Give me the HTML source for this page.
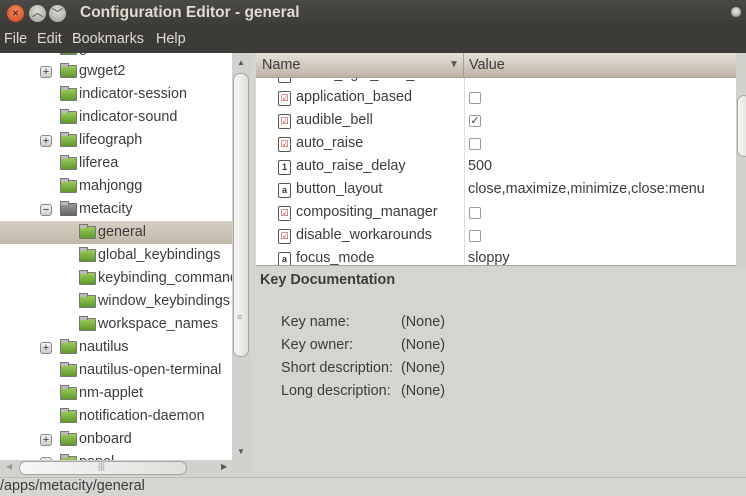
<!DOCTYPE html>
<html><head><style>
*{margin:0;padding:0;box-sizing:border-box}
body{width:746px;height:496px;overflow:hidden;background:#d6d4d1;font-family:"Liberation Sans","DejaVu Sans",sans-serif;font-size:14.4px;color:#3c3c3c;position:relative}
.a{position:absolute;white-space:nowrap}
#title{left:0;top:0;width:746px;height:27px;background:linear-gradient(#4a4944,#3c3b37)}
#menu{left:0;top:27px;width:746px;height:26px;background:#3c3b37;color:#dfdbd2}
.wb{position:absolute;top:5px;width:17px;height:17px;border-radius:50%}
#tree{left:0;top:53px;width:232px;height:407px;background:#fff;overflow:hidden}
.row{position:absolute;left:0;width:232px;height:23px;line-height:23px}
.fold{position:absolute;top:5px;width:17px;height:13px;border:1px solid #777;border-radius:1px;background:linear-gradient(#9ccb5a,#5e9a2c)}
.fold:before{content:"";position:absolute;left:-1px;top:-3px;width:7px;height:3px;background:#bbb;border:1px solid #777;border-bottom:none}
.exp{position:absolute;top:6px;width:12px;height:12px;border:1px solid #888;border-radius:3px;background:linear-gradient(#f4f4f4,#ccc);font-size:11px;line-height:10px;text-align:center;color:#333}
.vs{background:#d3d1cd}
.thumb{position:absolute;background:linear-gradient(90deg,#f6f6f5,#e0dfdc);border:1px solid #a9a7a3;border-radius:7px}
#list{left:256px;top:53px;width:480px;height:213px;background:#fff;overflow:hidden;border-bottom:1px solid #a5a29d}
.lr{position:absolute;left:0;width:480px;height:23px;line-height:23px}
.ic{position:absolute;left:22px;top:5px;width:13px;height:15px;border:1px solid #555;border-radius:2px;background:#fff;font-size:9px;line-height:12px;text-align:center;font-weight:bold;color:#333}
.ck{position:absolute;left:213px;top:6px;width:12px;height:12px;border:1px solid #999;border-radius:2px;background:#fff;font-size:11px;line-height:10px;text-align:center}
#hdr{z-index:5}
</style></head><body>
<div class="a" id="title">
 <div class="wb" style="left:7px;background:radial-gradient(circle at 50% 35%,#f78a5e,#d0431b);color:#3c1a0e;font-size:12px;line-height:17px;text-align:center">×</div>
 <div class="wb" style="left:29px;background:radial-gradient(circle at 50% 35%,#dedcd6,#9f9d97);color:#3c3b37;font-size:11px;line-height:17px;text-align:center">︿</div>
 <div class="wb" style="left:49px;background:radial-gradient(circle at 50% 35%,#dedcd6,#9f9d97);color:#3c3b37;font-size:11px;line-height:19px;text-align:center">﹀</div>
 <div class="a" style="left:80px;top:4px;color:#dfdbd2;font-weight:bold;font-size:15.5px">Configuration Editor - general</div>
 <div class="wb" style="left:731px;top:7px;width:10px;height:10px;background:radial-gradient(circle at 50% 40%,#eee,#888)"></div>
</div>
<div class="a" id="menu"><span class="a" style="left:4px;top:4px">File</span><span class="a" style="left:37px;top:4px">Edit</span><span class="a" style="left:72px;top:4px">Bookmarks</span><span class="a" style="left:156px;top:4px">Help</span></div>

<div class="a" id="tree">
<div class="row" style="top:-16px"><div class="fold" style="left:60px"></div><span class="a" style="left:79px">gconf</span></div>
<div class="row" style="top:7px"><div class="exp" style="left:40px">+</div><div class="fold" style="left:60px"></div><span class="a" style="left:79px">gwget2</span></div>
<div class="row" style="top:30px"><div class="fold" style="left:60px"></div><span class="a" style="left:79px">indicator-session</span></div>
<div class="row" style="top:53px"><div class="fold" style="left:60px"></div><span class="a" style="left:79px">indicator-sound</span></div>
<div class="row" style="top:76px"><div class="exp" style="left:40px">+</div><div class="fold" style="left:60px"></div><span class="a" style="left:79px">lifeograph</span></div>
<div class="row" style="top:99px"><div class="fold" style="left:60px"></div><span class="a" style="left:79px">liferea</span></div>
<div class="row" style="top:122px"><div class="fold" style="left:60px"></div><span class="a" style="left:79px">mahjongg</span></div>
<div class="row" style="top:145px"><div class="exp" style="left:40px">−</div><div class="fold" style="left:60px;background:linear-gradient(#999,#666);border-color:#666"></div><span class="a" style="left:79px">metacity</span></div>
<div class="row" style="top:168px;background:linear-gradient(#d8d0c4,#c2b8aa)"><div class="fold" style="left:79px"></div><span class="a" style="left:98px">general</span></div>
<div class="row" style="top:191px"><div class="fold" style="left:79px"></div><span class="a" style="left:98px">global_keybindings</span></div>
<div class="row" style="top:214px"><div class="fold" style="left:79px"></div><span class="a" style="left:98px">keybinding_commands</span></div>
<div class="row" style="top:237px"><div class="fold" style="left:79px"></div><span class="a" style="left:98px">window_keybindings</span></div>
<div class="row" style="top:260px"><div class="fold" style="left:79px"></div><span class="a" style="left:98px">workspace_names</span></div>
<div class="row" style="top:283px"><div class="exp" style="left:40px">+</div><div class="fold" style="left:60px"></div><span class="a" style="left:79px">nautilus</span></div>
<div class="row" style="top:306px"><div class="fold" style="left:60px"></div><span class="a" style="left:79px">nautilus-open-terminal</span></div>
<div class="row" style="top:329px"><div class="fold" style="left:60px"></div><span class="a" style="left:79px">nm-applet</span></div>
<div class="row" style="top:352px"><div class="fold" style="left:60px"></div><span class="a" style="left:79px">notification-daemon</span></div>
<div class="row" style="top:375px"><div class="exp" style="left:40px">+</div><div class="fold" style="left:60px"></div><span class="a" style="left:79px">onboard</span></div>
<div class="row" style="top:398px"><div class="exp" style="left:40px">+</div><div class="fold" style="left:60px"></div><span class="a" style="left:79px">panel</span></div>
</div>
<div class="a vs" style="left:232px;top:53px;width:18px;height:407px"></div>
<div class="a" style="left:237px;top:58px;font-size:8px;color:#555">▲</div>
<div class="a" style="left:237px;top:447px;font-size:8px;color:#555">▼</div>
<div class="thumb" style="left:233px;top:73px;width:16px;height:284px"></div>
<div class="a" style="left:237px;top:312px;font-size:9px;color:#999">≡</div>
<div class="a vs" style="left:0;top:460px;width:250px;height:16px"></div>
<div class="a" style="left:6px;top:462px;font-size:8px;color:#999">◀</div>
<div class="a" style="left:221px;top:462px;font-size:8px;color:#555">▶</div>
<div class="thumb" style="left:19px;top:461px;width:168px;height:14px"></div>
<div class="a" style="left:98px;top:461px;font-size:9px;color:#999">|||</div>

<div class="a" id="list">
<div class="a" style="left:208px;top:24px;width:1px;height:190px;background:#ddd"></div>
<div class="lr" style="top:10px"><div class="ic"></div><span class="a" style="left:40px">action_right_click_titlebar</span><span class="a" style="left:213px">menu</span></div>
<div class="lr" style="top:33px"><div class="ic" style="color:#b22">☑</div><span class="a" style="left:40px">application_based</span><div class="ck"></div></div>
<div class="lr" style="top:56px"><div class="ic" style="color:#b22">☑</div><span class="a" style="left:40px">audible_bell</span><div class="ck">✓</div></div>
<div class="lr" style="top:79px"><div class="ic" style="color:#b22">☑</div><span class="a" style="left:40px">auto_raise</span><div class="ck"></div></div>
<div class="lr" style="top:102px"><div class="ic">1</div><span class="a" style="left:40px">auto_raise_delay</span><span class="a" style="left:212px">500</span></div>
<div class="lr" style="top:125px"><div class="ic">a</div><span class="a" style="left:40px">button_layout</span><span class="a" style="left:212px">close,maximize,minimize,close:menu</span></div>
<div class="lr" style="top:148px"><div class="ic" style="color:#b22">☑</div><span class="a" style="left:40px">compositing_manager</span><div class="ck"></div></div>
<div class="lr" style="top:171px"><div class="ic" style="color:#b22">☑</div><span class="a" style="left:40px">disable_workarounds</span><div class="ck"></div></div>
<div class="lr" style="top:194px"><div class="ic">a</div><span class="a" style="left:40px">focus_mode</span><span class="a" style="left:212px">sloppy</span></div>
<div class="a" id="hdr" style="left:0;top:0;width:480px;height:25px;background:linear-gradient(#e6e1d8,#bdb3a5);border-bottom:1px solid #a89f92"><span class="a" style="left:6px;top:4px">Name</span><span class="a" style="left:193px;top:6px;font-size:10px;color:#555">▼</span><div class="a" style="left:207px;top:0;width:1px;height:25px;background:#a89f92"></div><span class="a" style="left:213px;top:4px">Value</span></div>
</div>
<div class="a vs" style="left:736px;top:53px;width:10px;height:213px"></div>
<div class="thumb" style="left:737px;top:95px;width:14px;height:62px"></div>

<div class="a" style="left:260px;top:272px;font-weight:bold">Key Documentation</div>
<div class="a" style="left:281px;top:314px">Key name:</div><div class="a" style="left:401px;top:314px">(None)</div>
<div class="a" style="left:281px;top:337px">Key owner:</div><div class="a" style="left:401px;top:337px">(None)</div>
<div class="a" style="left:281px;top:360px">Short description:</div><div class="a" style="left:401px;top:360px">(None)</div>
<div class="a" style="left:281px;top:383px">Long description:</div><div class="a" style="left:401px;top:383px">(None)</div>
<div class="a" style="left:0;top:477px;width:746px;height:1px;background:#bbb"></div>
<div class="a" style="left:0;top:478px">/apps/metacity/general</div>
</body></html>
